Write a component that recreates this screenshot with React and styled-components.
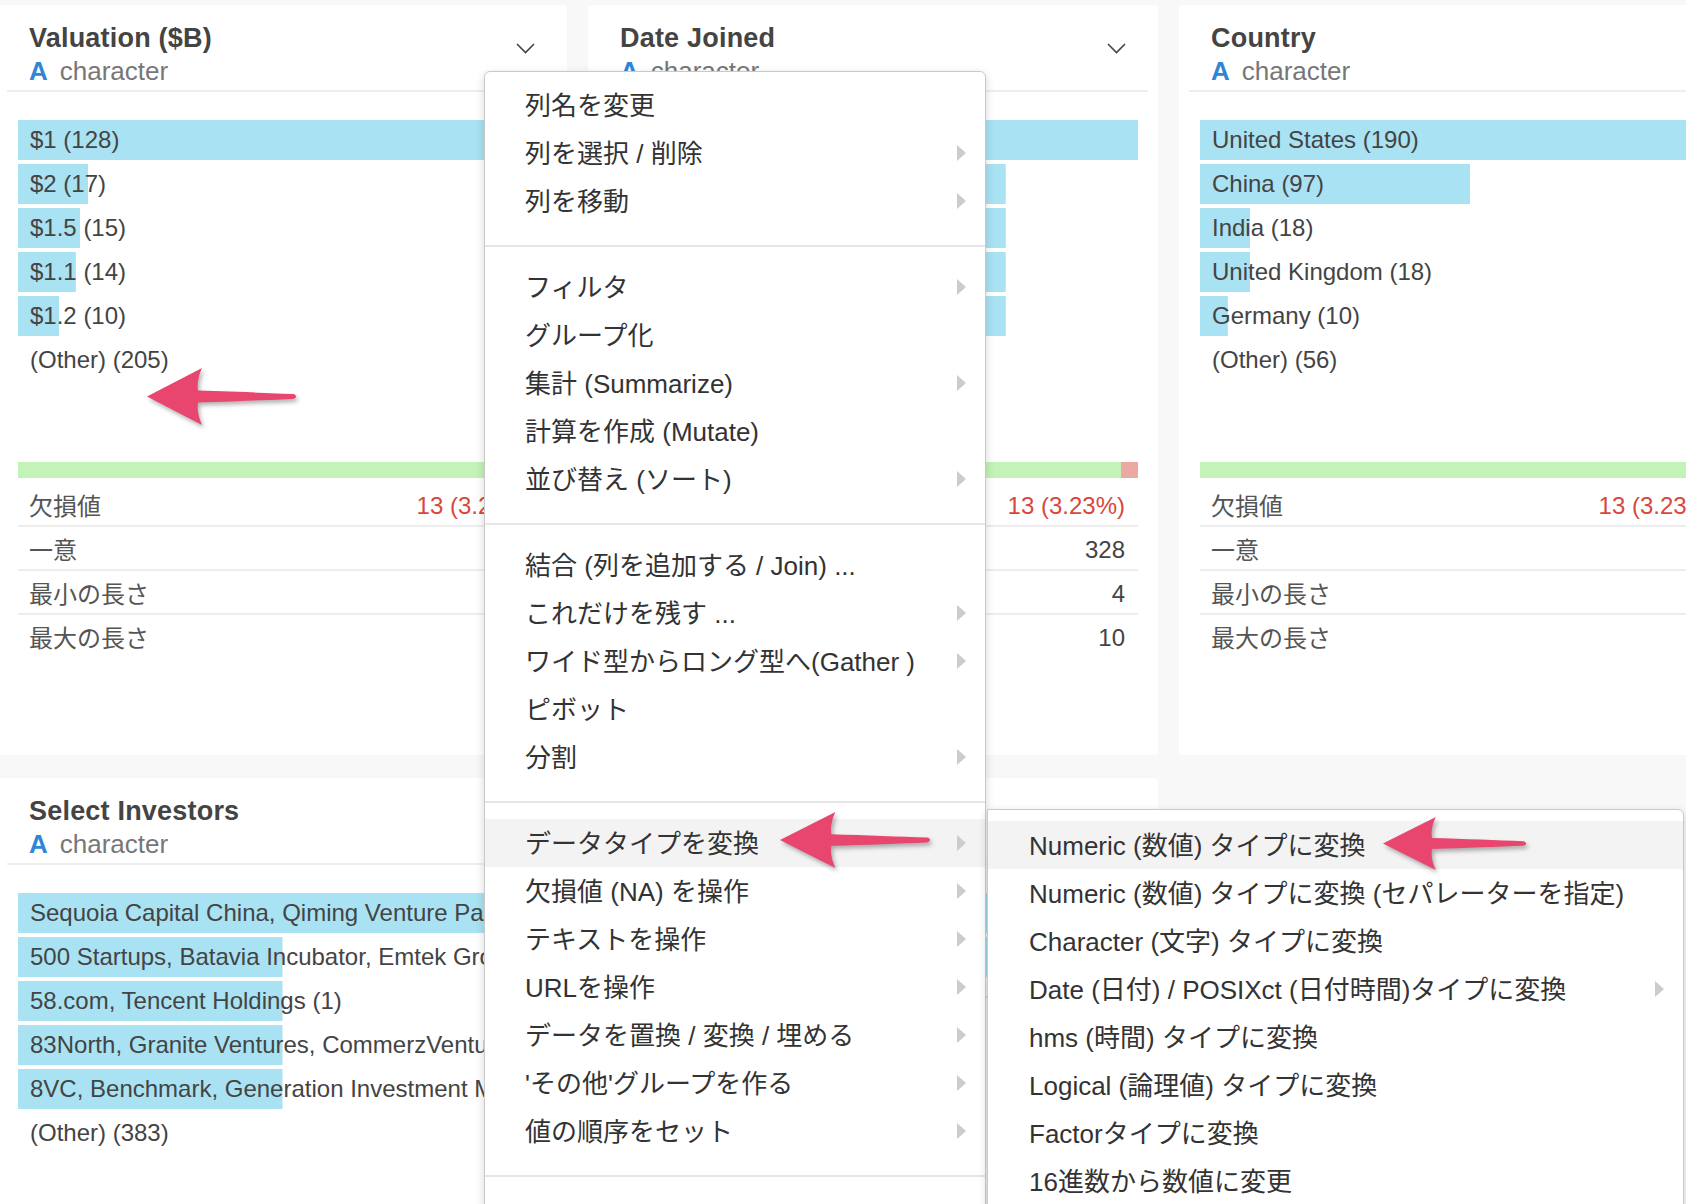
import React from "react";
import styled, { createGlobalStyle } from "styled-components";

const GlobalStyle = createGlobalStyle`
  html, body {
    margin: 0;
    padding: 0;
    background: #f8f8f8;
  }
  body {
    font-family: "Liberation Sans", "Noto Sans CJK JP", sans-serif;
    color: #444;
    overflow: hidden;
  }
`;

const columns = [
  {
    title: "Valuation ($B)",
    max: 128,
    bars: [
      ["$1 (128)", 128],
      ["$2 (17)", 17],
      ["$1.5 (15)", 15],
      ["$1.1 (14)", 14],
      ["$1.2 (10)", 10],
      ["(Other) (205)", 0],
    ],
    missing: 3.23,
    stats: [
      ["欠損値", "13 (3.23%)"],
      ["一意", "46"],
      ["最小の長さ", "2"],
      ["最大の長さ", "6"],
    ],
  },
  {
    title: "Date Joined",
    max: 4,
    bars: [
      ["7/13/2017 (4)", 4],
      ["1/1/2021 (3)", 3],
      ["2/15/2018 (3)", 3],
      ["6/24/2021 (3)", 3],
      ["7/1/2021 (3)", 3],
      ["(Other) (386)", 0],
    ],
    missing: 3.23,
    stats: [
      ["欠損値", "13 (3.23%)"],
      ["一意", "328"],
      ["最小の長さ", "4"],
      ["最大の長さ", "10"],
    ],
  },
  {
    title: "Country",
    max: 190,
    bars: [
      ["United States (190)", 190],
      ["China (97)", 97],
      ["India (18)", 18],
      ["United Kingdom (18)", 18],
      ["Germany (10)", 10],
      ["(Other) (56)", 0],
    ],
    missing: 3.23,
    stats: [
      ["欠損値", "13 (3.23%)"],
      ["一意", "46"],
      ["最小の長さ", "5"],
      ["最大の長さ", "20"],
    ],
  },
  {
    title: "Select Investors",
    max: 2,
    bars: [
      ["Sequoia Capital China, Qiming Venture Partners, Sinovation Ventures (2)", 2],
      ["500 Startups, Batavia Incubator, Emtek Group (1)", 1],
      ["58.com, Tencent Holdings (1)", 1],
      ["83North, Granite Ventures, CommerzVentures (1)", 1],
      ["8VC, Benchmark, Generation Investment Management (1)", 1],
      ["(Other) (383)", 0],
    ],
  },
  {
    title: "Industry",
    max: 82,
    bars: [
      ["Fintech (82)", 82],
      ["Internet software & services (71)", 71],
      ["E-commerce & direct-to-consumer (48)", 48],
      ["Artificial intelligence (35)", 35],
      ["Health (31)", 31],
      ["(Other) (136)", 0],
    ],
  },
];

const mainMenu = [
  [
    ["列名を変更", false],
    ["列を選択 / 削除", true],
    ["列を移動", true],
  ],
  [
    ["フィルタ", true],
    ["グループ化", false],
    ["集計 (Summarize)", true],
    ["計算を作成 (Mutate)", false],
    ["並び替え (ソート)", true],
  ],
  [
    ["結合 (列を追加する / Join) ...", false],
    ["これだけを残す ...", true],
    ["ワイド型からロング型へ(Gather )", true],
    ["ピボット", false],
    ["分割", true],
  ],
  [
    ["データタイプを変換", true, true],
    ["欠損値 (NA) を操作", true],
    ["テキストを操作", true],
    ["URLを操作", true],
    ["データを置換 / 変換 / 埋める", true],
    ["'その他'グループを作る", true],
    ["値の順序をセット", true],
  ],
  [["この列の詳細 (Column Info)", false]],
];

const subMenu = [
  ["Numeric (数値) タイプに変換", false, true],
  ["Numeric (数値) タイプに変換 (セパレーターを指定)", false],
  ["Character (文字) タイプに変換", false],
  ["Date (日付) / POSIXct (日付時間)タイプに変換", true],
  ["hms (時間) タイプに変換", false],
  ["Logical (論理値) タイプに変換", false],
  ["Factorタイプに変換", false],
  ["16進数から数値に変更", false],
];

const Page = styled.div`
  position: relative;
  width: 1686px;
  height: 1204px;
  overflow: hidden;
`;

const Board = styled.div`
  display: grid;
  grid-template-columns: repeat(3, 570px);
  grid-auto-rows: 750px;
  column-gap: 21px;
  row-gap: 23px;
  padding-top: 5px;
  margin-left: -3px;
`;

const Card = styled.section`
  background: #fff;
  border-radius: 4px;
  overflow: hidden;
`;

const Header = styled.header`
  display: flex;
  justify-content: space-between;
  margin: 0 10px;
  padding: 17px 22px 2px;
  border-bottom: 2px solid #eeeeee;
`;

const Title = styled.h2`
  margin: 0;
  font-size: 27px;
  line-height: 32px;
  font-weight: 700;
  letter-spacing: 0.2px;
  color: #444;
  white-space: nowrap;
`;

const TypeLine = styled.div`
  font-size: 26px;
  line-height: 34px;
  color: #777;
  white-space: nowrap;
`;

const TypeMark = styled.span`
  color: #2f86d6;
  font-weight: 700;
  margin-right: 12px;
`;

const Chevron = styled.svg`
  flex: none;
  margin-top: 21px;
`;

const Body = styled.div`
  padding: 28px 20px 0 21px;
`;

const BarList = styled.div`
  height: 342px;
`;

const BarRow = styled.div`
  height: 40px;
  margin-bottom: 4px;
  padding-left: 12px;
  font-size: 24px;
  line-height: 40px;
  color: #444;
  white-space: nowrap;
  background-image: linear-gradient(#a9e2f3, #a9e2f3);
  background-repeat: no-repeat;
  background-size: ${(p) => p.$pct}% 100%;
`;

const Completeness = styled.div`
  display: flex;
  height: 16px;
`;

const Filled = styled.div`
  flex: 1;
  background: #c3f3b7;
`;

const Missing = styled.div`
  background: #eba9a1;
`;

const Stats = styled.div`
  margin-top: 5px;
`;

const StatRow = styled.div`
  display: flex;
  justify-content: space-between;
  align-items: center;
  height: 38px;
  padding: 4px 13px 0 11px;
  font-size: 24px;
  color: #555;
  white-space: nowrap;
  border-bottom: 2px solid #eeeeee;
  &:last-child {
    border-bottom: none;
  }
`;

const StatLabel = styled.span`
  margin-bottom: 4px;
`;

const StatValue = styled.span`
  color: ${(p) => (p.$alert ? "#d9473c" : "#444")};
`;

const Menu = styled.div`
  position: absolute;
  left: 484px;
  top: 71px;
  width: 500px;
  height: 1200px;
  padding-top: 9px;
  background: #fff;
  border: 1px solid #c9c9c9;
  border-radius: 6px 6px 0 0;
  box-shadow: 0 3px 10px rgba(0, 0, 0, 0.16);
  font-size: 26px;
  color: #333;
`;

const SubMenu = styled.div`
  position: absolute;
  left: calc(100% + 2px);
  top: -10px;
  width: 695px;
  height: 420px;
  padding-top: 11px;
  background: #fff;
  border: 1px solid #c9c9c9;
  border-radius: 0 6px 0 0;
  box-shadow: 0 3px 10px rgba(0, 0, 0, 0.16);
`;

const Item = styled.div`
  position: relative;
  display: flex;
  justify-content: space-between;
  align-items: center;
  height: 44px;
  padding: 0 19px 4px ${(p) => (p.$sub ? 41 : 40)}px;
  white-space: nowrap;
  background: ${(p) => (p.$active ? "#f3f3f3" : "transparent")};
`;

const Caret = styled.span`
  width: 0;
  height: 0;
  margin-top: 4px;
  border-left: 9px solid #cccccc;
  border-top: 8px solid transparent;
  border-bottom: 8px solid transparent;
`;

const Separator = styled.div`
  height: 2px;
  margin: 20px 0 16px;
  background: #e6e6e6;
`;

const ArrowMark = styled.svg`
  position: absolute;
  left: ${(p) => p.$x}px;
  top: ${(p) => p.$y}px;
  filter: drop-shadow(2px 3px 2px rgba(0, 0, 0, 0.3));
`;

function Arrow({ x, y, w, h }) {
  return (
    <ArrowMark $x={x} $y={y} width={w} height={h} viewBox="0 0 150 58" preserveAspectRatio="none">
      <path
        d="M0,29 L55,0 C51,9 50,16 51,23 C85,24 120,25.5 146,26.5 C150,27 150,31 146,31.5 C120,32.5 85,34 51,35 C50,42 51,49 55,58 Z"
        fill="#e8456f"
      />
    </ArrowMark>
  );
}

function ColumnCard({ col }) {
  return (
    <Card>
      <Header>
        <div>
          <Title>{col.title}</Title>
          <TypeLine>
            <TypeMark>A</TypeMark>character
          </TypeLine>
        </div>
        <Chevron width="19" height="11" viewBox="0 0 19 11">
          <polyline points="1,1 9.5,9.5 18,1" fill="none" stroke="#444" strokeWidth="1.6" />
        </Chevron>
      </Header>
      <Body>
        <BarList>
          {col.bars.map(([label, n]) => (
            <BarRow key={label} $pct={(n / col.max) * 100}>
              {label}
            </BarRow>
          ))}
        </BarList>
        {col.stats && (
          <>
            <Completeness>
              <Filled />
              <Missing style={{ width: `${col.missing}%` }} />
            </Completeness>
            <Stats>
              {col.stats.map(([label, value], i) => (
                <StatRow key={label}>
                  <StatLabel>{label}</StatLabel>
                  <StatValue $alert={i === 0}>{value}</StatValue>
                </StatRow>
              ))}
            </Stats>
          </>
        )}
      </Body>
    </Card>
  );
}

export default function App() {
  return (
    <Page>
      <GlobalStyle />
      <Board>
        {columns.map((col) => (
          <ColumnCard key={col.title} col={col} />
        ))}
      </Board>

      <Menu>
        {mainMenu.map((group, gi) => (
          <React.Fragment key={gi}>
            {gi > 0 && <Separator />}
            {group.map(([label, more, active]) => (
              <Item key={label} $active={active}>
                <span>{label}</span>
                {more && <Caret />}
                {active && (
                  <SubMenu>
                    {subMenu.map(([s, sMore, sActive]) => (
                      <Item key={s} $sub $active={sActive}>
                        <span>{s}</span>
                        {sMore && <Caret />}
                      </Item>
                    ))}
                  </SubMenu>
                )}
              </Item>
            ))}
          </React.Fragment>
        ))}
      </Menu>

      <Arrow x={147} y={368} w={150} h={57} />
      <Arrow x={780} y={812} w={151} h={56} />
      <Arrow x={1383} y={817} w={144} h={53} />
    </Page>
  );
}
